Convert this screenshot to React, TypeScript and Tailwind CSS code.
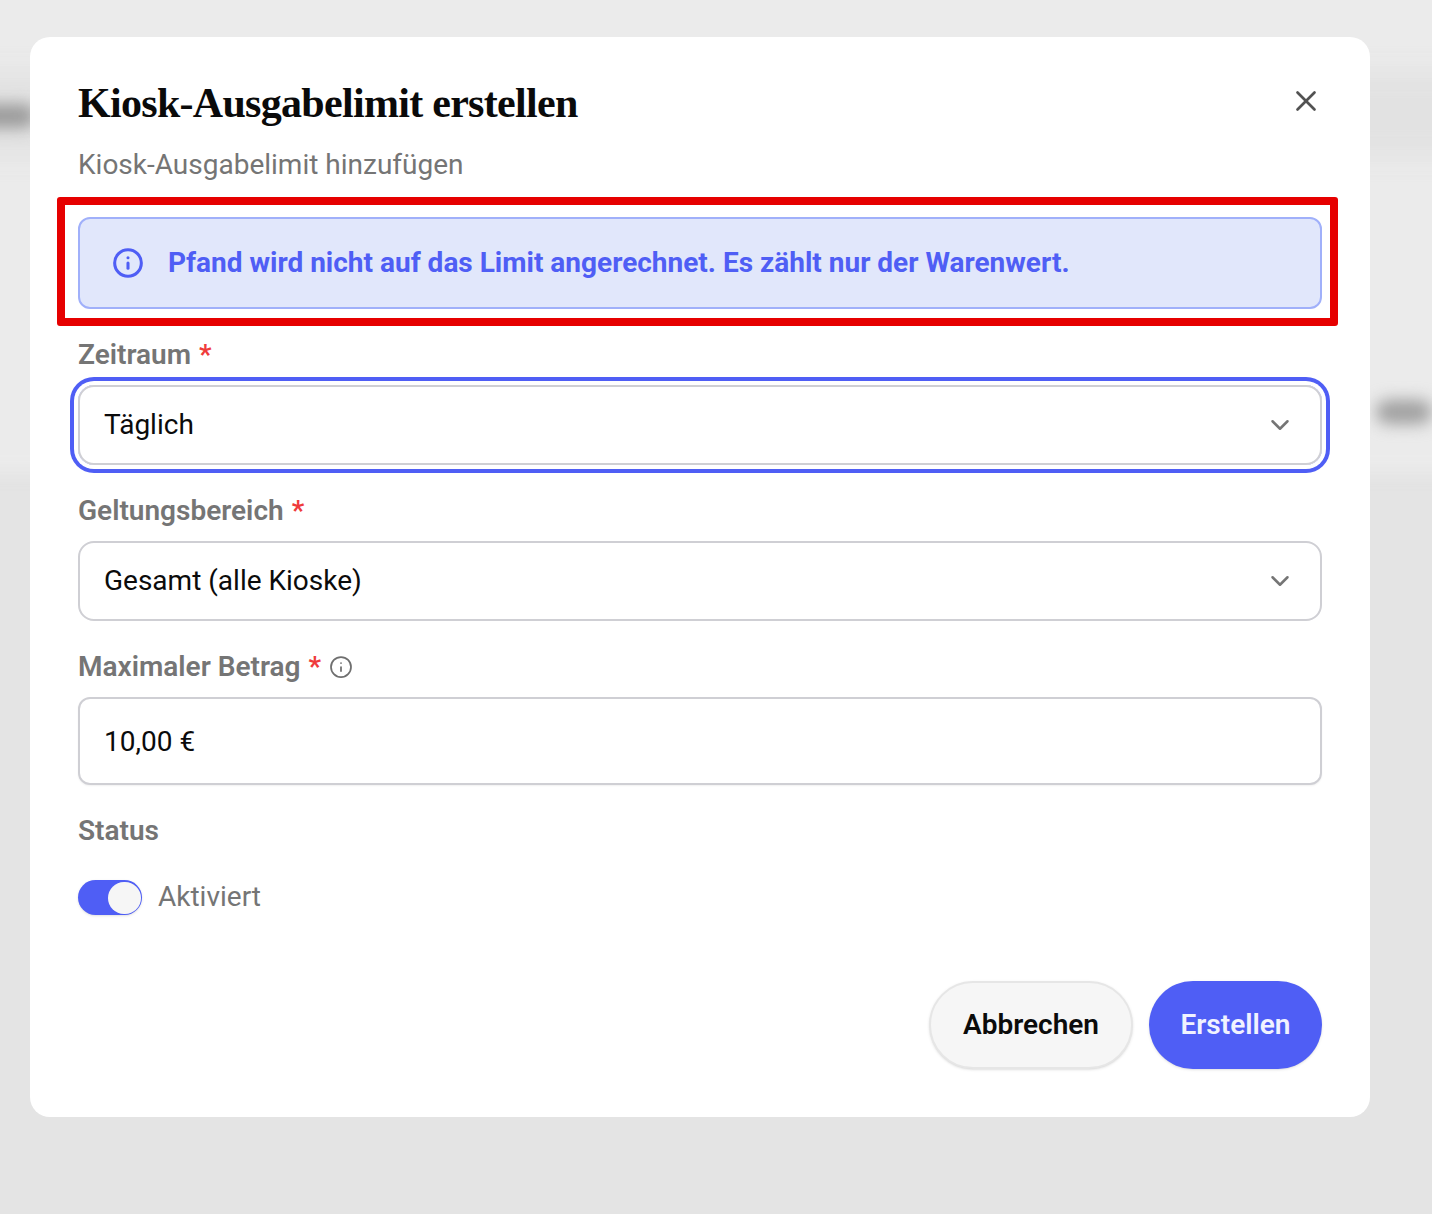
import React from 'react';
import { ChevronDown, Info, X } from 'lucide-react';

function Label({ text, required, hint }: { text: string; required?: boolean; hint?: boolean }) {
  return (
    <div className="flex h-9 items-center text-[28px] leading-9 font-semibold text-[#757575]">
      <span>{text}</span>
      {required && <span className="ml-2 text-[#ef3b3b]">*</span>}
      {hint && <Info className="ml-2 h-6 w-6 text-[#6f6f6f]" strokeWidth={1.75} />}
    </div>
  );
}

function SelectBox({ value }: { value: string }) {
  return (
    <div className="flex h-20 items-center justify-between rounded-2xl border-2 border-[#cfcfd4] bg-white pr-[25px] pl-6 text-[28px] text-[#0b0b0b]">
      <span>{value}</span>
      <ChevronDown className="h-[30px] w-[30px] text-[#757575]" strokeWidth={2} />
    </div>
  );
}

export default function App() {
  return (
    <div className="relative h-[1214px] w-full overflow-hidden bg-[#e4e4e4] font-['Roboto',sans-serif]">
      {/* blurred page behind the dialog */}
      <div className="absolute -inset-x-8 -top-8 h-[505px] bg-[#ebebeb] blur-sm" />
      <div className="absolute -inset-x-8 top-[72px] h-[84px] bg-[#e2e2e2] blur-md" />
      <div className="absolute top-[104px] -left-6 h-[24px] w-[60px] rounded-full bg-[#9a9a9a] blur-sm" />
      <div className="absolute top-[400px] left-[1376px] h-[24px] w-[56px] rounded-full bg-[#9f9f9f] blur-sm" />

      <div className="relative mt-[37px] ml-[30px] flex h-[1080px] w-[1340px] flex-col rounded-[20px] bg-white px-12 pt-[42px]">
        <div className="flex h-12 items-center justify-between">
          <h1 className="font-['Liberation_Serif',serif] text-[42px] leading-[48px] font-bold tracking-[-0.7px] text-[#0a0a0a]">
            Kiosk-Ausgabelimit erstellen
          </h1>
          <X className="mr-[-1px] mb-1 h-[34px] w-[34px] text-[#525252]" strokeWidth={1.9} />
        </div>
        <p className="mt-5 h-9 text-[28px] leading-9 text-[#757575]">Kiosk-Ausgabelimit hinzufügen</p>

        <div className="mt-[34px] flex h-[92px] items-center gap-6 rounded-xl border-2 border-[#a0b0fa] bg-[#e1e7fb] pl-8 text-[28px] font-bold text-[#4f5ef5]">
          <Info className="h-8 w-8" strokeWidth={2.3} />
          <span>Pfand wird nicht auf das Limit angerechnet. Es zählt nur der Warenwert.</span>
        </div>

        <div className="mt-7 flex flex-col gap-3">
          <Label text="Zeitraum" required />
          <div className="rounded-2xl shadow-[0_0_0_4px_#fff,0_0_0_8px_#4f5ef5]">
            <SelectBox value="Täglich" />
          </div>
        </div>

        <div className="mt-7 flex flex-col gap-3">
          <Label text="Geltungsbereich" required />
          <SelectBox value="Gesamt (alle Kioske)" />
        </div>

        <div className="mt-7 flex flex-col gap-3">
          <Label text="Maximaler Betrag" required hint />
          <div className="flex h-[88px] items-center rounded-xl border-2 border-[#cfcfd4] bg-white pt-[2px] pl-6 text-[28px] text-[#0b0b0b] shadow-[0_1px_2px_rgba(0,0,0,0.06)]">
            10,00 €
          </div>
        </div>

        <div className="mt-7">
          <Label text="Status" />
        </div>
        <div className="mt-[31px] flex h-[35px] items-start gap-4">
          <div className="flex h-[35px] w-16 items-center justify-end rounded-full bg-[#4f5ef5] pr-[1px] shadow-sm">
            <div className="h-8 w-[33px] rounded-full bg-[#f6f6f6]" />
          </div>
          <span className="text-[28px] leading-[33px] text-[#757575]">Aktiviert</span>
        </div>

        <div className="mt-auto mb-12 flex justify-end gap-4">
          <button className="h-[88px] w-[204px] rounded-full border-2 border-[#e6e6e6] bg-[#f6f6f6] text-[28px] font-semibold text-[#0b0b0b] shadow-sm">
            Abbrechen
          </button>
          <button className="h-[88px] w-[173px] rounded-full bg-[#4f5ef5] text-[28px] font-semibold text-[#f0f2ff] shadow-sm">
            Erstellen
          </button>
        </div>

        {/* red annotation frame */}
        <div className="absolute top-[160px] left-[27px] h-[129px] w-[1281px] rounded-[3px] border-8 border-[#e60000]" />
      </div>
    </div>
  );
}
